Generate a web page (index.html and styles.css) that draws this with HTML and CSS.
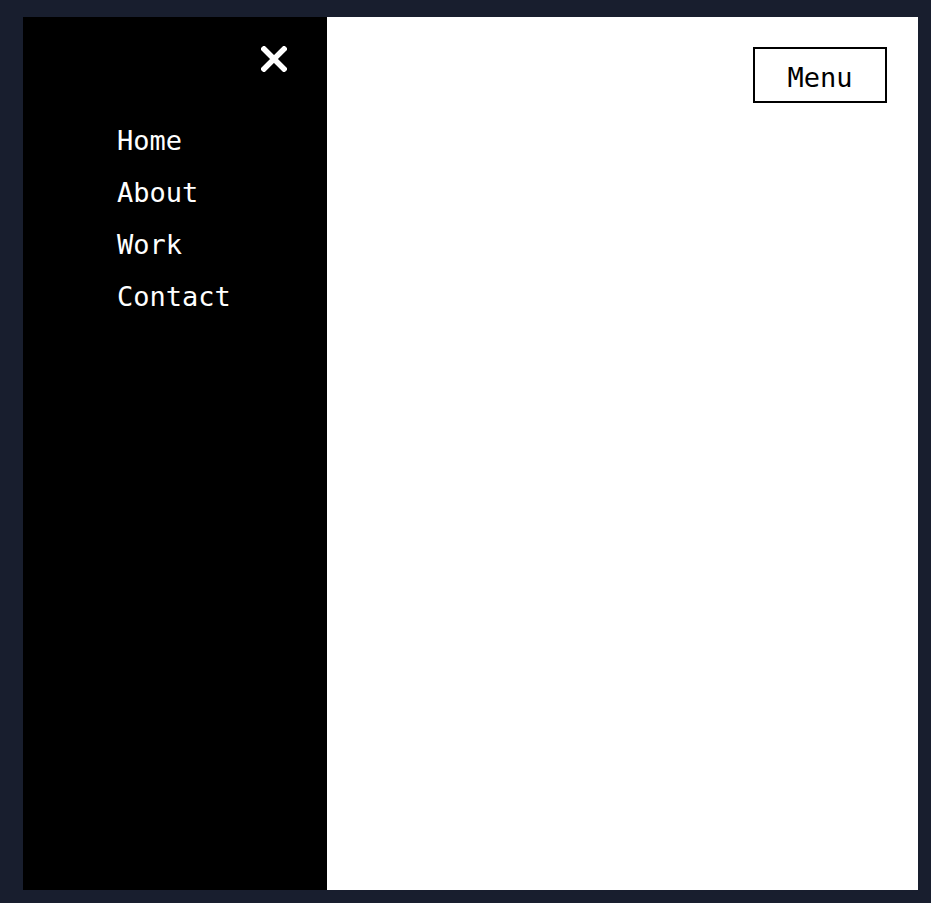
FILE: index.html
```html
<!DOCTYPE html>
<html lang="en">
<head>
<meta charset="utf-8">
<title>Menu</title>
<link rel="stylesheet" href="styles.css">
</head>
<body>
<div class="frame">
  <aside class="sidebar">
    <button class="close" aria-label="Close">
      <svg width="26" height="26" viewBox="0 0 26 26"><path d="M3 3 L23 23 M23 3 L3 23" stroke="#fff" stroke-width="5.5" stroke-linecap="square" fill="none"/></svg>
    </button>
    <nav class="nav">
      <a href="#">Home</a>
      <a href="#">About</a>
      <a href="#">Work</a>
      <a href="#">Contact</a>
    </nav>
  </aside>
  <main class="content">
    <button class="menu-btn">Menu</button>
  </main>
</div>
</body>
</html>
```
FILE: styles.css
```css
html, body { margin: 0; height: 100%; }
body {
  background: #181e2e;
  padding: 17px 13px 13px 23px;
  box-sizing: border-box;
  font-family: "DejaVu Sans Mono", "Liberation Mono", monospace;
}
.frame {
  display: flex;
  height: 100%;
  background: #fff;
}
.sidebar {
  width: 304px;
  background: #000;
  display: flex;
  flex-direction: column;
}
.close {
  align-self: flex-end;
  margin: 29px 40px 0 0;
  padding: 0;
  border: 0;
  background: none;
  width: 26px;
  height: 26px;
  display: block;
}
.close svg { display: block; }
.nav {
  display: flex;
  flex-direction: column;
  padding-left: 94px;
  margin-top: 43px;
}
.nav a {
  color: #fff;
  text-decoration: none;
  font-size: 27px;
  line-height: 52px;
  height: 52px;
}
.content {
  flex: 1;
  display: flex;
  justify-content: flex-end;
  align-items: flex-start;
  padding: 30px 31px 0 0;
}
.menu-btn {
  font-family: "DejaVu Sans Mono", "Liberation Mono", monospace;
  font-size: 27px;
  background: #fff;
  color: #000;
  border: 2px solid #000;
  width: 134px;
  height: 56px;
  padding: 4px 0 0;
}
```
